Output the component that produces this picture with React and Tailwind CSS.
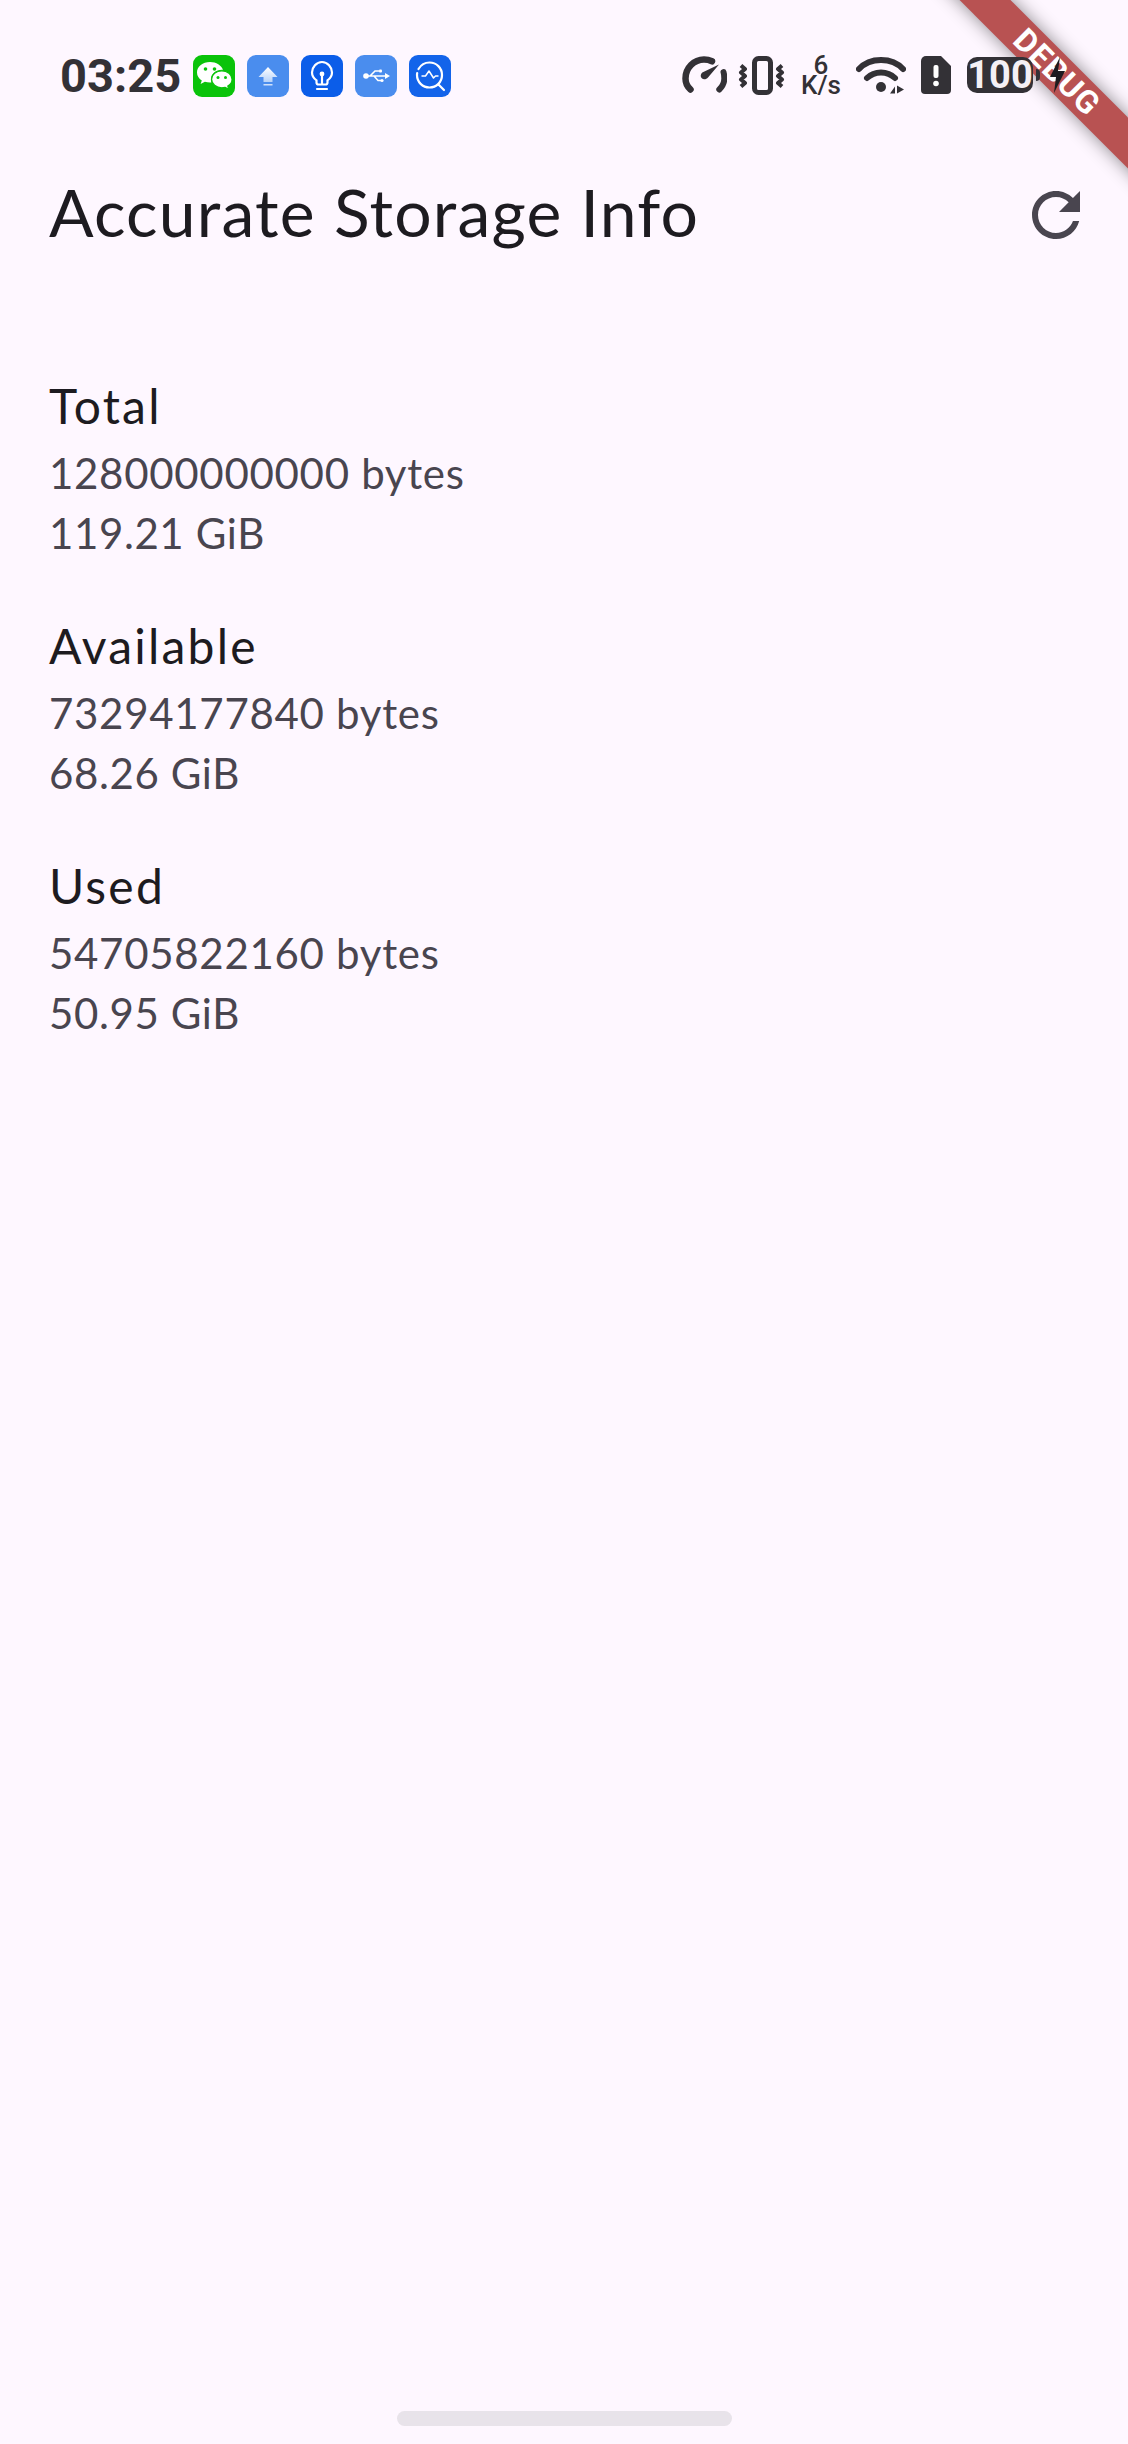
import React from 'react';

const WeChatIcon = () => (
  <svg viewBox="0 0 42 42" className="w-[42px] h-[42px]">
    <rect width="42" height="42" rx="9" fill="#0ac30a" />
    <path d="M17 7C9.800 7 4 11.600 4 17.400c0 3.300 1.900 6.100 4.800 8l-1.200 3.700 4.300-2.300c1.600.5 3.300.7 5.100.7.500 0 1 0 1.400-.1-.3-1-.5-2-.5-3 0-5.400 5-9.600 11.100-9.600h1C28.500 10.400 23.300 7 17 7z" fill="#fff" />
    <path d="M39 24.300c0-4.700-4.600-8.500-10.200-8.500s-10.200 3.800-10.200 8.500 4.600 8.500 10.200 8.500c1.200 0 2.300-.2 3.400-.5l3.500 1.900-.9-3.100c2.700-1.600 4.200-3.900 4.200-6.300z" fill="#fff" stroke="#0ac30a" strokeWidth="1.200" />
    <circle cx="12.500" cy="14" r="1.800" fill="#0ac30a" />
    <circle cx="21.500" cy="14" r="1.800" fill="#0ac30a" />
    <circle cx="25" cy="22.500" r="1.500" fill="#0ac30a" />
    <circle cx="32.500" cy="22.500" r="1.500" fill="#0ac30a" />
  </svg>
);

const UploadIcon = () => (
  <svg viewBox="0 0 42 42" className="w-[42px] h-[42px]">
    <defs>
      <linearGradient id="up" x1="0" y1="0" x2="0" y2="1">
        <stop offset="0" stopColor="#ffffff" />
        <stop offset="1" stopColor="#b5d2fa" />
      </linearGradient>
    </defs>
    <rect width="42" height="42" rx="9" fill="#4a8dee" />
    <path d="M21 12l9.500 10H25.500v5h-9v-5h-5z" fill="url(#up)" />
    <rect x="16.500" y="29" width="9" height="1.500" fill="#cfe1fb" />
  </svg>
);

const BulbIcon = () => (
  <svg viewBox="0 0 42 42" className="w-[42px] h-[42px]">
    <rect width="42" height="42" rx="9" fill="#0b5de9" />
    <path d="M15.500 27.500v-2.200c-2.800-1.900-4.500-4.700-4.500-7.800C11 12.200 15.500 7 21 7s10 5.200 10 10.500c0 3.100-1.700 5.900-4.500 7.800v2.200c0 1.100-.9 2-2 2h-7c-1.100 0-2-.9-2-2z" fill="none" stroke="#fff" strokeWidth="2.200" />
    <path d="M16 34h10" stroke="#fff" strokeWidth="2.200" strokeLinecap="round" />
    <circle cx="21" cy="19" r="2.400" fill="#fff" />
    <path d="M21 19v10" stroke="#fff" strokeWidth="2.200" />
  </svg>
);

const UsbIcon = () => (
  <svg viewBox="0 0 42 42" className="w-[42px] h-[42px]">
    <rect width="42" height="42" rx="9" fill="#4a8dee" />
    <circle cx="11" cy="21" r="2.800" fill="#fff" />
    <path d="M11 21h20M15 21l5-5h4M19 21l4 4.500h3" fill="none" stroke="#fff" strokeWidth="1.600" />
    <path d="M30 18l5 3-5 3z" fill="#fff" />
    <rect x="24" y="14.500" width="3" height="3" rx="1" fill="#fff" />
    <circle cx="27" cy="25.500" r="1.600" fill="#fff" />
  </svg>
);

const PulseSearchIcon = () => (
  <svg viewBox="0 0 42 42" className="w-[42px] h-[42px]">
    <rect width="42" height="42" rx="9" fill="#1364ea" />
    <path d="M9.500 14C12 9.800 16.500 7.500 20.500 7.500 27.500 7.500 33 13 33 20s-5.500 12.500-12.500 12.500S8 27 8 20c0-.7.100-1.400.2-2" fill="none" stroke="#fff" strokeWidth="2.200" strokeLinecap="round" />
    <path d="M12.500 21h4l3.500-5 4.500 7 2-2h3" fill="none" stroke="#fff" strokeWidth="1.500" strokeLinejoin="round" />
    <path d="M29.500 29.500l5.500 5.500" stroke="#fff" strokeWidth="2.200" strokeLinecap="round" />
  </svg>
);

const Speedometer = () => (
  <svg viewBox="0 0 45 38" className="w-[45px] h-[38px]">
    <path d="M8.500 33.500C5 30.500 3.500 27 3.500 22.500 3.500 12 12 3.500 22 3.500c3 0 5.500.6 8 1.800" fill="none" stroke="#333136" strokeWidth="6.500" strokeLinecap="round" />
    <path d="M41.500 16c.6 2 .8 4 .8 6.500 0 4.500-1.800 8-5 11" fill="none" stroke="#333136" strokeWidth="6" strokeLinecap="round" />
    <path d="M37 8.500L26 21.500c-1.500 1.900-4.500 2.400-6.200.8s-1.200-4.300.5-5.800z" fill="#333136" />
  </svg>
);

const Vibrate = () => (
  <svg viewBox="0 0 47 39" className="w-[47px] h-[39px]">
    <rect x="16.500" y="2.500" width="16" height="34" rx="4" fill="none" stroke="#333136" strokeWidth="5" />
    <path d="M3 9.500l4 3.500-4 3.500 4 3.500-4 3.500 4 3.500-4 3.500M44 9.500l-4 3.500 4 3.500-4 3.500 4 3.500-4 3.500 4 3.500" fill="none" stroke="#333136" strokeWidth="4" strokeLinejoin="round" />
  </svg>
);

const Wifi = () => (
  <svg viewBox="0 0 50 38" className="w-[50px] h-[38px]">
    <path d="M3 13C14 1 36 1 47 13" fill="none" stroke="#333136" strokeWidth="6" strokeLinecap="round" />
    <path d="M11 22c7.500-7.500 20.500-7.500 28 0" fill="none" stroke="#333136" strokeWidth="6" strokeLinecap="round" />
    <circle cx="25" cy="31" r="5" fill="#333136" />
    <path d="M34 37.500l5-7v7zM41 29.500v8l7-4z" fill="#333136" />
  </svg>
);

const SimAlert = () => (
  <svg viewBox="0 0 30 38" className="w-[30px] h-[38px]">
    <path d="M5 0h15l10 10v24a4 4 0 0 1-4 4H4a4 4 0 0 1-4-4V5a5 5 0 0 1 5-5z" fill="#333136" />
    <rect x="12.500" y="9" width="5" height="13" rx="2" fill="#fff" />
    <circle cx="15" cy="27.500" r="2.800" fill="#fff" />
  </svg>
);

const StatusBar = () => (
  <div className="relative z-10 h-[129px] pt-[55px] pl-[60px] flex items-start" style={{ fontFamily: 'Roboto, sans-serif' }}>
    <span className="w-[133px] text-[#333136] text-[47px] leading-[42px] font-bold">03:25</span>
    <div className="flex gap-3">
      <WeChatIcon />
      <UploadIcon />
      <BulbIcon />
      <UsbIcon />
      <PulseSearchIcon />
    </div>
    <div className="ml-[231px] flex items-center text-[#333136]">
      <Speedometer />
      <div className="ml-[11px]"><Vibrate /></div>
      <div className="ml-[17px] w-[38px] flex flex-col items-center font-medium text-[26px] leading-[20px]">
        <span>6</span>
        <span>K/s</span>
      </div>
      <div className="ml-4"><Wifi /></div>
      <div className="ml-[15px]"><SimAlert /></div>
      <div className="ml-4 w-[66px] h-9 rounded-[10px] bg-[#333136] text-[#f4f0f5] text-[38px] leading-9 font-bold text-center">100</div>
      <div className="ml-[3px] w-1 h-3 rounded-r-sm bg-[#333136]" />
      <svg viewBox="0 0 15 36" className="ml-[10px] w-[15px] h-9">
        <path d="M10 0L0 20h6L4 36l11-22H8z" fill="#1d1b20" />
      </svg>
    </div>
  </div>
);

const stats = [
  { label: 'Total', bytes: '128000000000 bytes', gib: '119.21 GiB' },
  { label: 'Available', bytes: '73294177840 bytes', gib: '68.26 GiB' },
  { label: 'Used', bytes: '54705822160 bytes', gib: '50.95 GiB' },
];

export default function App() {
  return (
    <div className="relative h-[2444px] overflow-hidden bg-[#fef7ff]" style={{ fontFamily: 'Lato, sans-serif' }}>
      <StatusBar />

      <header className="h-[168px] pl-[49px] flex items-center justify-between">
        <h1 className="text-[66px] leading-[88px] pb-[3px] tracking-[1.2px] text-[#1d1b20]">Accurate Storage Info</h1>
        <button className="w-36 h-36 pt-[3px] flex items-center justify-center">
          <svg viewBox="0 0 24 24" className="w-[72px] h-[72px]" fill="#49454f">
            <path d="M17.65 6.35C16.2 4.9 14.21 4 12 4c-4.42 0-7.99 3.58-7.99 8s3.57 8 7.99 8c3.73 0 6.84-2.55 7.73-6h-2.08c-.82 2.33-3.04 4-5.65 4-3.31 0-6-2.69-6-6s2.69-6 6-6c1.66 0 3.14.69 4.22 1.78L13 11h7V4l-2.35 2.35z" />
          </svg>
        </button>
      </header>

      <main className="pt-[50px]">
        {stats.map((s) => (
          <div key={s.label} className="px-[49px] py-6">
            <div className="text-[48px] leading-[69px] mb-[3px] tracking-[2.2px] text-[#1d1b20]">{s.label}</div>
            <div className="text-[42px] leading-[60px] tracking-[0.7px] text-[#49454f]">{s.bytes}</div>
            <div className="text-[42px] leading-[60px] tracking-[0.6px] text-[#49454f]">{s.gib}</div>
          </div>
        ))}
      </main>

      {/* flutter debug banner */}
      <div className="absolute left-[907px] top-[54px] w-[300px] h-9 rotate-45 bg-[#b85252] shadow-[0_0_18px_rgba(0,0,0,0.45)] text-white text-[32px] leading-9 font-bold text-center tracking-[1px]" style={{ fontFamily: 'Roboto, sans-serif' }}>
        DEBUG
      </div>

      {/* gesture handle */}
      <div className="absolute left-[397px] bottom-[18px] w-[335px] h-[15px] rounded-full bg-[#e8e3ea]" />
    </div>
  );
}
